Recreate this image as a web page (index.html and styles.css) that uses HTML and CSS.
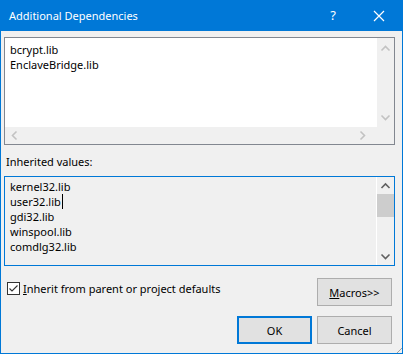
FILE: index.html
```html
<!DOCTYPE html>
<html>
<head>
    <title>Additional Dependencies</title>
    <link rel="stylesheet" href="styles.css">
</head>
<body>
    <div class="window">
        <div class="titlebar">
            <span class="title">Additional Dependencies</span>
            <span class="title-help">?</span>
            <span class="title-close">
                <svg width="12" height="12" viewBox="0 0 12 12"><path d="M1 1 L11 11 M11 1 L1 11" stroke="#fff" stroke-width="1.2"/></svg>
            </span>
        </div>

        <div class="content">
            <div class="editbox">
                <div class="edit-main">
                    <div class="edit-text">
                        <div>bcrypt.lib</div>
                        <div>EnclaveBridge.lib</div>
                    </div>
                    <div class="vscroll disabled">
                        <svg class="arrow" width="17" height="17" viewBox="0 0 17 17"><path d="M4.5 10.5 L8.5 6.5 L12.5 10.5" fill="none" stroke="#c2c2c2" stroke-width="1.6"/></svg>
                        <svg class="arrow" width="17" height="17" viewBox="0 0 17 17"><path d="M4.5 6.5 L8.5 10.5 L12.5 6.5" fill="none" stroke="#c2c2c2" stroke-width="1.6"/></svg>
                    </div>
                </div>
                <div class="hscroll">
                    <svg width="17" height="17" viewBox="0 0 17 17"><path d="M10.5 4.5 L6.5 8.5 L10.5 12.5" fill="none" stroke="#c2c2c2" stroke-width="1.6"/></svg>
                    <svg width="17" height="17" viewBox="0 0 17 17"><path d="M6.5 4.5 L10.5 8.5 L6.5 12.5" fill="none" stroke="#c2c2c2" stroke-width="1.6"/></svg>
                    <div class="corner"></div>
                </div>
            </div>

            <div class="label">Inherited values:</div>

            <div class="inherited">
                <div class="edit-text">
                    <div>kernel32.lib</div>
                    <div>user32.lib<span class="caret"></span></div>
                    <div>gdi32.lib</div>
                    <div>winspool.lib</div>
                    <div>comdlg32.lib</div>
                </div>
                <div class="vscroll">
                    <svg class="arrow" width="17" height="17" viewBox="0 0 17 17"><path d="M4.5 11 L8.5 7 L12.5 11" fill="none" stroke="#606060" stroke-width="1.6"/></svg>
                    <div class="thumb-track"><div class="thumb"></div></div>
                    <svg class="arrow" width="17" height="17" viewBox="0 0 17 17"><path d="M4.5 6.5 L8.5 10.5 L12.5 6.5" fill="none" stroke="#606060" stroke-width="1.6"/></svg>
                </div>
            </div>

            <div class="options-row">
                <label class="check">
                    <span class="checkbox">
                        <svg width="11" height="11" viewBox="0 0 11 11"><path d="M1.5 5.5 L4 8 L9.5 2.5" fill="none" stroke="#333" stroke-width="1.1"/></svg>
                    </span>
                    <span><u>I</u>nherit from parent or project defaults</span>
                </label>
                <button class="btn"><u>M</u>acros&gt;&gt;</button>
            </div>

            <div class="button-row">
                <button class="btn default">OK</button>
                <button class="btn">Cancel</button>
            </div>
        </div>
        <div class="grip"></div>
    </div>
</body>
</html>
```

FILE: styles.css
```css
body {
    margin: 0;
    font-family: "Noto Sans", "Open Sans", sans-serif;
    font-size: 11px;
    color: #000;
}
.window {
    position: relative;
    width: 403px;
    height: 354px;
    box-sizing: border-box;
    border: 1px solid #0078d7;
    border-top: none;
    background-color: #f0f0f0;
    overflow: hidden;
}
.titlebar {
    height: 31px;
    background-color: #0078d7;
    color: white;
    display: flex;
    align-items: center;
    margin: 0 -1px;
    padding-left: 9px;
}
.title {
    flex: 1;
    font-size: 11px;
    padding-bottom: 1px;
}
.title-help {
    width: 46px;
    text-align: center;
    font-size: 13px;
    padding-bottom: 1px;
}
.title-close {
    width: 46px;
    display: flex;
    justify-content: center;
    padding-right: 1px;
}
.content {
    padding: 6px 7px 0 3px;
}
.editbox {
    height: 108px;
    box-sizing: border-box;
    border: 1px solid #828790;
    background-color: white;
    display: flex;
    flex-direction: column;
}
.edit-main {
    flex: 1;
    display: flex;
}
.edit-text {
    flex: 1;
    padding: 4px 0 0 5px;
    line-height: 15px;
}
.vscroll {
    width: 17px;
    background-color: #f0f0f0;
    display: flex;
    flex-direction: column;
    justify-content: space-between;
}
.vscroll.disabled {
    padding: 2px 0 1px;
}
.arrow {
    display: block;
}
.hscroll {
    height: 17px;
    background-color: #f0f0f0;
    display: flex;
    justify-content: space-between;
    align-items: center;
}
.hscroll svg {
    display: block;
    margin-left: 1px;
}
.hscroll svg + svg {
    margin-left: auto;
    margin-right: 6px;
}
.corner {
    width: 17px;
    height: 17px;
}
.label {
    height: 15px;
    line-height: 15px;
    margin: 9px 0 7px 2px;
}
.inherited {
    height: 90px;
    box-sizing: border-box;
    border: 1px solid #0078d7;
    background-color: #f0f0f0;
    display: flex;
}
.inherited .edit-text {
    padding-top: 2px;
}
.inherited .vscroll {
    border-left: 1px solid #ffffff;
    justify-content: flex-start;
}
.thumb-track {
    flex: 1;
}
.thumb {
    height: 23px;
    background-color: #cdcdcd;
}
.caret {
    display: inline-block;
    width: 1px;
    height: 15px;
    background-color: #000;
    vertical-align: top;
    margin-left: 1px;
}
.options-row {
    display: flex;
    justify-content: space-between;
    align-items: flex-start;
    margin-top: 12px;
    padding-right: 3px;
}
.check {
    display: flex;
    align-items: center;
    margin-top: 3px;
    padding-left: 3px;
}
.checkbox {
    width: 13px;
    height: 13px;
    box-sizing: border-box;
    border: 1px solid #333;
    background-color: white;
    display: flex;
    align-items: center;
    justify-content: center;
    margin-right: 3px;
}
.checkbox svg {
    display: block;
}
.btn {
    width: 75px;
    height: 28px;
    box-sizing: border-box;
    border: 1px solid #adadad;
    background-color: #e1e1e1;
    font-family: "Noto Sans", "Open Sans", sans-serif;
    font-size: 11px;
    color: #000;
    padding: 0;
}
.btn.default {
    border: 2px solid #0078d7;
}
.button-row {
    display: flex;
    justify-content: flex-end;
    gap: 5px;
    margin-top: 10px;
    padding-right: 3px;
}
.grip {
    position: absolute;
    right: 0;
    bottom: 0;
    width: 10px;
    height: 10px;
    background: repeating-linear-gradient(135deg, transparent 0 2px, #a0a0a0 2px 3px, transparent 3px 4px);
    clip-path: polygon(100% 0, 100% 100%, 0 100%);
}
```
